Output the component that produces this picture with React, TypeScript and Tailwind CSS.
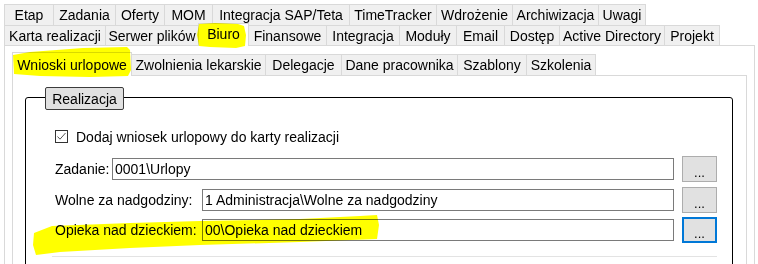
import React from "react";

const row1: [string, number][] = [
  ["Etap", 49],
  ["Zadania", 62],
  ["Oferty", 49],
  ["MOM", 48],
  ["Integracja SAP/Teta", 137],
  ["TimeTracker", 87],
  ["Wdrożenie", 76],
  ["Archiwizacja", 86],
  ["Uwagi", 48],
];

const row2: [string, number][] = [
  ["Karta realizacji", 101],
  ["Serwer plików", 93],
  ["Biuro", 51],
  ["Finansowe", 77],
  ["Integracja", 73],
  ["Moduły", 57],
  ["Email", 48],
  ["Dostęp", 55],
  ["Active Directory", 105],
  ["Projekt", 56],
];

const inner: [string, number][] = [
  ["Wnioski urlopowe", 120],
  ["Zwolnienia lekarskie", 133],
  ["Delegacje", 76],
  ["Dane pracownika", 116],
  ["Szablony", 69],
  ["Szkolenia", 70],
];

function Btn({ focused }: { focused?: boolean }) {
  return (
    <div
      className={
        "w-[35px] h-[26px] bg-[#e1e1e1] flex items-center justify-center text-[13px] leading-none pt-[6px] " +
        (focused ? "border-2 border-[#0078d7]" : "border border-[#adadad]")
      }
    >
      ...
    </div>
  );
}

export default function App() {
  return (
    <div className="relative isolate w-[758px] h-[264px] overflow-hidden bg-white text-black text-[14px] font-['Liberation_Sans',Arial,sans-serif]">
      <div className="pl-[4px] pt-[4px]">
        {/* row 1 */}
        <div className="flex h-[21px]">
          {row1.map(([t, w], i) => (
            <div
              key={t}
              style={{ width: w }}
              className={
                "h-[21px] bg-[#f0f0f0] border-t border-l border-[#d9d9d9] flex items-center justify-center whitespace-nowrap leading-none " +
                (i === row1.length - 1 ? "border-r" : "")
              }
            >
              {t}
            </div>
          ))}
        </div>
        {/* row 2 */}
        <div className="relative z-10 flex items-end h-[20px]">
          {row2.map(([t, w], i) => {
            const sel = t === "Biuro";
            return (
              <div
                key={t}
                style={{ width: w }}
                className={
                  sel
                    ? "h-[23px] -mb-px bg-white border-t border-l border-r border-[#d9d9d9] flex items-center justify-center whitespace-nowrap leading-none pb-[2px]"
                    : "h-[20px] bg-[#f0f0f0] border-t border-l border-[#d9d9d9] flex items-center justify-center whitespace-nowrap leading-none " +
                      (i === row2.length - 1 ? "border-r " : "") +
                      (row2[i - 1] && row2[i - 1][0] === "Biuro" ? "border-l-0" : "")
                }
              >
                {t}
              </div>
            );
          })}
        </div>
        {/* outer pane */}
        <div className="w-[751px] h-[230px] border border-[#d9d9d9] bg-white">
          <div className="pl-[7px] pt-[8px]">
            <div className="relative z-10 flex items-end h-[21px]">
              {inner.map(([t, w], i) => {
                const sel = i === 0;
                return (
                  <div
                    key={t}
                    style={{ width: w }}
                    className={
                      sel
                        ? "h-[24px] -mb-px bg-white border-t border-l border-r border-[#d9d9d9] flex items-center justify-center whitespace-nowrap leading-none"
                        : "h-[21px] bg-[#f0f0f0] border-t border-[#d9d9d9] flex items-center justify-center whitespace-nowrap leading-none " +
                          (i === 1 ? "" : "border-l ") +
                          (i === inner.length - 1 ? "border-r" : "")
                    }
                  >
                    {t}
                  </div>
                );
              })}
            </div>
            {/* inner pane */}
            <div className="w-[735px] h-[200px] border border-[#d9d9d9] bg-white">
              <div className="pl-[12px] pt-[21px]">
                {/* group box */}
                <div className="relative w-[708px] h-[200px] border border-black rounded-[3px]">
                  <div className="absolute left-[19px] -top-[11px] w-[79px] h-[23px] bg-[#e1e1e1] border border-[#3c3c3c] rounded-[2px] flex items-center justify-center leading-none">
                    Realizacja
                  </div>
                  <div className="pl-[29px] pt-[32px]">
                    <div className="flex items-center h-[13px]">
                      <div className="w-[13px] h-[13px] border border-[#333] bg-white flex items-center justify-center">
                        <svg width="11" height="11" viewBox="0 0 11 11">
                          <path d="M1.5 5.5 L4 8.2 L9.5 2" fill="none" stroke="#555" strokeWidth="1" />
                        </svg>
                      </div>
                      <span className="ml-[8px] leading-none whitespace-nowrap">
                        Dodaj wniosek urlopowy do karty realizacji
                      </span>
                    </div>
                    {/* Zadanie */}
                    <div className="flex items-center h-[26px] mt-[13px]">
                      <span className="w-[57px] whitespace-nowrap leading-none">Zadanie:</span>
                      <div className="w-[562px] h-[22px] border border-[#7a7a7a] bg-white flex items-center pl-[2px] leading-none whitespace-nowrap">
                        0001\Urlopy
                      </div>
                      <div className="ml-[8px]">
                        <Btn />
                      </div>
                    </div>
                    {/* Wolne */}
                    <div className="flex items-center h-[26px] mt-[5px]">
                      <span className="w-[147px] whitespace-nowrap leading-none">Wolne za nadgodziny:</span>
                      <div className="w-[472px] h-[22px] border border-[#7a7a7a] bg-white flex items-center pl-[2px] leading-none whitespace-nowrap">
                        1 Administracja\Wolne za nadgodziny
                      </div>
                      <div className="ml-[8px]">
                        <Btn />
                      </div>
                    </div>
                    {/* Opieka */}
                    <div className="flex items-center h-[26px] mt-[4px]">
                      <span className="w-[147px] whitespace-nowrap leading-none">Opieka nad dzieckiem:</span>
                      <div className="w-[472px] h-[22px] border border-[#7a7a7a] bg-white flex items-center pl-[2px] leading-none whitespace-nowrap">
                        00\Opieka nad dzieckiem
                      </div>
                      <div className="ml-[8px]">
                        <Btn focused />
                      </div>
                    </div>
                    <div className="-ml-[3px] mt-[13px] w-[665px] h-px bg-[#e3e3e3]" />
                  </div>
                </div>
              </div>
            </div>
          </div>
        </div>
      </div>

      {/* highlighter marks */}
      <svg
        className="absolute left-0 top-0 z-30 pointer-events-none mix-blend-multiply"
        width="758"
        height="264"
        viewBox="0 0 758 264"
      >
        <polygon
          fill="#ffff00"
          points="199,24 215,23 238,24 244,26 246,35 245,46 236,48 210,47 199,46 197,35"
        />
        <polygon
          fill="#ffff00"
          points="13,55 30,52 83,48 127,47 130,50 131,70 128,76 90,77 40,76 14,74"
        />
        <polygon
          fill="#ffff00"
          points="34,233 52,226 130,223 200,221 300,219 360,216 377,215 379,225 377,239 300,242 200,245 130,248 60,252 36,255 33,245"
        />
      </svg>
    </div>
  );
}
